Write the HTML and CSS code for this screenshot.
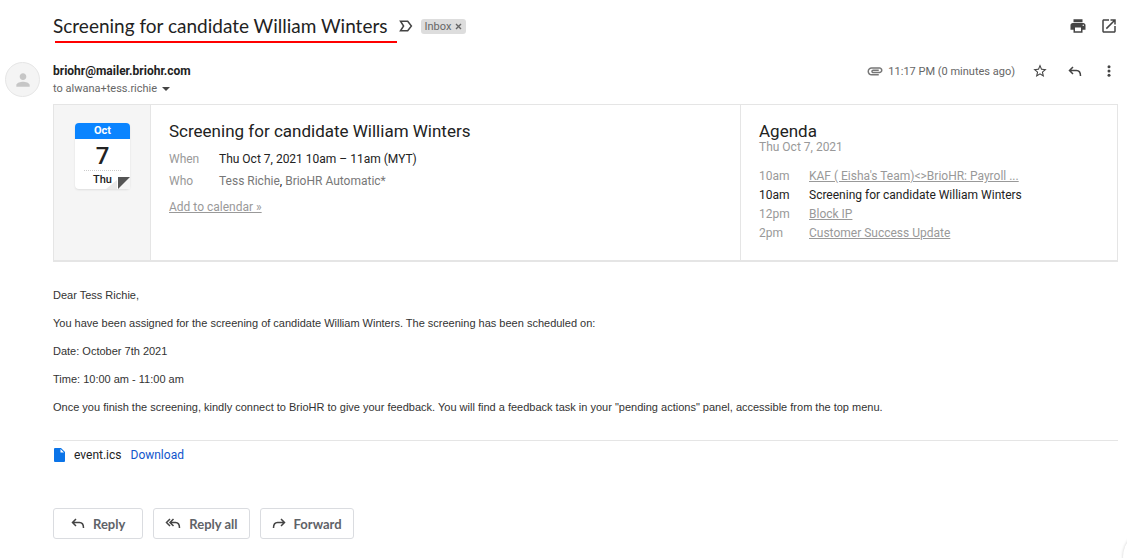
FILE: index.html
```html
<!DOCTYPE html>
<html lang="en">
<head>
  <meta charset="UTF-8" />
  <meta name="viewport" content="width=device-width, initial-scale=1.0"/>
  <title>Screening for candidate William Winters</title>
  <link rel="stylesheet" href="styles.css">
</head>
<body>

  <!-- Subject -->
  <header class="subject">
    <h1>Screening for candidate William Winters</h1>
    <button class="icon-btn" aria-label="Important">
      <svg width="14" height="12" viewBox="0 0 14 12"><path d="M1.500 1.200h7.200L12.400 6l-3.700 4.800H1.500L4.600 6z" fill="none" stroke="#444" stroke-width="1.500"/></svg>
    </button>
    <span class="label">Inbox <button class="label-close" aria-label="Remove label"><svg width="7" height="7" viewBox="0 0 7 7"><path d="M1 1l5 5M6 1L1 6" stroke="#666" stroke-width="1.400"/></svg></button></span>
    <div class="subject-actions">
      <button class="icon-btn" aria-label="Print">
        <svg width="18" height="18" viewBox="0 0 24 24" fill="#444"><path d="M19 8H5c-1.660 0-3 1.340-3 3v6h4v4h12v-4h4v-6c0-1.660-1.340-3-3-3zm-3 11H8v-5h8v5zm3-7c-.55 0-1-.45-1-1s.45-1 1-1 1 .45 1 1-.45 1-1 1zm-1-9H6v4h12V3z"/></svg>
      </button>
      <button class="icon-btn" aria-label="Open in new window">
        <svg width="18" height="18" viewBox="0 0 24 24" fill="#444"><path d="M19 19H5V5h7V3H5c-1.110 0-2 .9-2 2v14c0 1.100.89 2 2 2h14c1.100 0 2-.9 2-2v-7h-2v7zM14 3v2h3.590l-9.830 9.830 1.410 1.410L19 6.410V10h2V3h-7z"/></svg>
      </button>
    </div>
  </header>

  <!-- Sender -->
  <section class="sender">
    <div class="avatar">
      <svg width="20" height="20" viewBox="0 0 24 24" fill="#c6c6c6"><path d="M12 12c2.210 0 4-1.790 4-4s-1.790-4-4-4-4 1.790-4 4 1.790 4 4 4zm0 2c-2.670 0-8 1.340-8 4v2h16v-2c0-2.660-5.330-4-8-4z"/></svg>
    </div>
    <div class="sender-info">
      <strong>briohr@mailer.briohr.com</strong>
      <span class="recipient">to alwana+tess.richie <svg width="8" height="4" viewBox="0 0 8 4"><path d="M0 0h8L4 4z" fill="#444"/></svg></span>
    </div>
    <div class="sender-meta">
      <svg width="18" height="18" viewBox="0 0 24 24" fill="#777"><path d="M2 12.500C2 9.460 4.460 7 7.500 7H18c2.210 0 4 1.790 4 4s-1.790 4-4 4H9.500C8.120 15 7 13.880 7 12.500S8.120 10 9.500 10H17v2H9.410c-.55 0-.55 1 0 1H18c1.100 0 2-.9 2-2s-.9-2-2-2H7.500C5.570 9 4 10.570 4 12.500S5.570 16 7.500 16H17v2H7.500C4.460 18 2 15.540 2 12.500z"/></svg>
      <span class="time">11:17 PM (0 minutes ago)</span>
      <button class="icon-btn" aria-label="Star">
        <svg width="16" height="16" viewBox="0 0 24 24" fill="#444"><path d="M22 9.240l-7.190-.62L12 2 9.190 8.630 2 9.240l5.460 4.730L5.820 21 12 17.270 18.180 21l-1.630-7.030L22 9.240zM12 15.400l-3.760 2.270 1-4.280-3.320-2.880 4.380-.38L12 6.100l1.710 4.040 4.380.38-3.320 2.880 1 4.280L12 15.400z"/></svg>
      </button>
      <button class="icon-btn" aria-label="Reply">
        <svg width="14" height="11" viewBox="0 0 14 11"><path d="M5 1L1.500 4.500 5 8M1.500 4.500H8.500Q12.500 4.500 12.500 10" fill="none" stroke="#444" stroke-width="1.500"/></svg>
      </button>
      <button class="icon-btn" aria-label="More">
        <svg width="14" height="12" viewBox="0 0 14 12" fill="#444"><circle cx="7" cy="1.700" r="1.500"/><circle cx="7" cy="6" r="1.500"/><circle cx="7" cy="10.300" r="1.500"/></svg>
      </button>
    </div>
  </section>

  <!-- Event card -->
  <section class="event">
    <div class="event-date">
      <div class="calendar">
        <div class="month">Oct</div>
        <div class="day">7</div>
        <div class="weekday">Thu</div>
        <svg class="fold" width="24" height="12" viewBox="0 0 24 12"><path d="M0 12L11 3v9z" fill="#e9e9e9"/><path d="M12 12h12V0z" fill="#f5f5f5"/><path d="M12 0h12L12 12z" fill="#555"/></svg>
      </div>
    </div>
    <div class="event-details">
      <h2>Screening for candidate William Winters</h2>
      <dl>
        <dt>When</dt>
        <dd>Thu Oct 7, 2021 10am – 11am (MYT)</dd>
        <dt>Who</dt>
        <dd class="people">Tess Richie<b>,</b> BrioHR Automatic*</dd>
      </dl>
      <a href="#">Add to calendar »</a>
    </div>
    <div class="agenda">
      <h2>Agenda</h2>
      <p>Thu Oct 7, 2021</p>
      <table>
        <tr>
          <td>10am</td>
          <td><a href="#">KAF ( Eisha's Team)&lt;&gt;BrioHR: Payroll ...</a></td>
        </tr>
        <tr class="current">
          <td>10am</td>
          <td>Screening for candidate William Winters</td>
        </tr>
        <tr>
          <td>12pm</td>
          <td><a href="#">Block IP</a></td>
        </tr>
        <tr>
          <td>2pm</td>
          <td><a href="#">Customer Success Update</a></td>
        </tr>
      </table>
    </div>
  </section>

  <!-- Message -->
  <main class="message">
    <p>Dear Tess Richie,</p>
    <p>You have been assigned for the screening of candidate William Winters. The screening has been scheduled on:</p>
    <p>Date: October 7th 2021</p>
    <p>Time: 10:00 am - 11:00 am</p>
    <p>Once you finish the screening, kindly connect to BrioHR to give your feedback. You will find a feedback task in your "pending actions" panel, accessible from the top menu.</p>
  </main>

  <!-- Attachment -->
  <div class="attachment">
    <svg width="11" height="14" viewBox="0 0 11 14"><path d="M1 0h6l4 4v9q0 1-1 1H1q-1 0-1-1V1q0-1 1-1z" fill="#0b74e8"/><path d="M6.500 1v3.500H10z" fill="#fff"/></svg>
    <span>event.ics</span>
    <a href="#">Download</a>
  </div>

  <footer class="actions">
    <button class="action-btn reply">
      <svg width="14" height="11" viewBox="0 0 14 11"><path d="M5 1L1.500 4.500 5 8M1.500 4.500H8.500Q12.500 4.500 12.500 10" fill="none" stroke="#444" stroke-width="1.500"/></svg>
      Reply
    </button>
    <button class="action-btn">
      <svg width="16" height="11" viewBox="0 0 16 11"><path d="M5 1L1.500 4.500 5 8M8.500 1L5 4.500 8.500 8M5 4.500H10.500Q14.500 4.500 14.500 10" fill="none" stroke="#444" stroke-width="1.500"/></svg>
      Reply all
    </button>
    <button class="action-btn">
      <svg width="14" height="11" viewBox="0 0 14 11"><path d="M9 1l3.500 3.500L9 8M12.500 4.500H5.500Q1.500 4.500 1.500 10" fill="none" stroke="#444" stroke-width="1.500"/></svg>
      Forward
    </button>
  </footer>

  <div class="side-toggle"></div>

</body>
</html>
```

FILE: styles.css
```css
body {
  margin: 0;
  padding: 11px 9px 12px 53px;
  font-family: Roboto, Arial, sans-serif;
  font-size: 12px;
  color: #222;
  background: #fff;
}

h1, h2, p, dl, dd {
  margin: 0;
  font-weight: normal;
}

button {
  font-family: inherit;
  cursor: pointer;
}

svg {
  display: block;
}

.icon-btn {
  display: flex;
  padding: 0;
  border: none;
  background: none;
}

/* subject line */
.subject {
  display: flex;
  align-items: center;
  height: 30px;
}

.subject h1 {
  position: relative;
  margin-right: 11px;
  font-family: Lato, sans-serif;
  font-size: 19px;
  line-height: 30px;
}

.subject h1::after {
  content: "";
  position: absolute;
  left: 2px;
  right: -9px;
  bottom: -2px;
  height: 2px;
  background: #f00;
}

.label {
  display: flex;
  align-items: center;
  gap: 4px;
  margin-left: 8px;
  padding: 0 4px;
  line-height: 15px;
  border-radius: 3px;
  background: #ddd;
  color: #666;
  font-size: 11px;
}

.label-close {
  padding: 0;
  border: none;
  background: none;
}

.subject-actions {
  display: flex;
  gap: 13px;
  margin-left: auto;
}

/* sender */
.sender {
  display: flex;
  align-items: flex-start;
  margin: 21px 0 0 -48px;
}

.avatar {
  display: flex;
  align-items: center;
  justify-content: center;
  box-sizing: border-box;
  width: 35px;
  height: 35px;
  margin-right: 13px;
  border: 1px solid #e6e6e6;
  border-radius: 50%;
  background: #f4f4f4;
}

.sender-info {
  display: flex;
  flex-direction: column;
  line-height: 18px;
}

.recipient {
  display: flex;
  align-items: center;
  gap: 5px;
  font-size: 11px;
  color: #666;
}

.sender-meta {
  display: flex;
  align-items: center;
  height: 18px;
  margin-left: auto;
  padding-right: 2px;
}

.time {
  margin: 0 17px 0 4px;
  font-size: 11px;
  color: #666;
}

.sender-meta .icon-btn + .icon-btn {
  margin-left: 20px;
}

/* event card */
.event {
  display: grid;
  grid-template-columns: 96px 1fr 377px;
  box-sizing: border-box;
  min-height: 158px;
  margin-top: 6px;
  border: 1px solid #e5e5e5;
  border-bottom-width: 2px;
}

.event-date {
  padding: 18px 20px 0 21px;
  background: #f5f5f5;
}

.calendar {
  position: relative;
  height: 66px;
  border-radius: 4px;
  background: #fff;
  box-shadow: 0 1px 2px #ddd;
  text-align: center;
}

.month {
  line-height: 16px;
  border-radius: 4px 4px 0 0;
  background: #0a84ff;
  color: #fff;
  font-size: 11px;
  font-weight: bold;
}

.day {
  margin: 0 9px;
  padding-top: 3px;
  line-height: 28px;
  border-bottom: 1px dotted #ccc;
  font-size: 24px;
  font-weight: 500;
}

.weekday {
  line-height: 17px;
  font-size: 11px;
  font-weight: 500;
}

.fold {
  position: absolute;
  right: 0;
  bottom: 0;
}

.event-details,
.agenda {
  padding: 16px 18px 0;
  border-left: 1px solid #e5e5e5;
}

.event h2 {
  font-size: 17px;
  line-height: 20px;
}

.event-details dl {
  display: grid;
  grid-template-columns: 50px 1fr;
  margin: 7px 0 8px;
  line-height: 22px;
}

.event dt,
.people,
.event a,
.agenda p,
.agenda td {
  color: #999;
}

.event .people {
  color: #777;
}

.people b {
  font-weight: normal;
  color: #222;
}

.agenda p {
  line-height: 13px;
}

.agenda table {
  margin-top: 13px;
  border-collapse: collapse;
  line-height: 19px;
}

.agenda td {
  padding: 0;
}

.agenda td:first-child {
  width: 50px;
}

.agenda .current td {
  color: #222;
}

/* message body */
.message {
  margin-top: 26px;
  padding-bottom: 26px;
  border-bottom: 1px solid #e5e5e5;
  font-family: "Liberation Sans", Arial, sans-serif;
  font-size: 11px;
  line-height: 14px;
  color: #333;
}

.message p + p {
  margin-top: 14px;
}

.attachment {
  display: flex;
  align-items: center;
  gap: 9px;
  padding: 5px 1px 0;
  line-height: 18px;
}

.attachment a {
  color: #15c;
  text-decoration: none;
}

/* bottom buttons */
.actions {
  display: flex;
  gap: 10px;
  margin-top: 44px;
}

.action-btn {
  display: flex;
  align-items: center;
  gap: 8px;
  height: 31px;
  padding: 0 11px;
  border: 1px solid #dadce0;
  border-radius: 3px;
  background: #fff;
  color: #5f6368;
  font-family: Lato, sans-serif;
  font-size: 13px;
  font-weight: bold;
}

.action-btn.reply {
  padding: 0 17px;
}

.side-toggle {
  position: fixed;
  right: -52px;
  bottom: -27px;
  width: 56px;
  height: 56px;
  border-radius: 50%;
  background: #fff;
  box-shadow: 0 0 3px #ccc;
}
```
